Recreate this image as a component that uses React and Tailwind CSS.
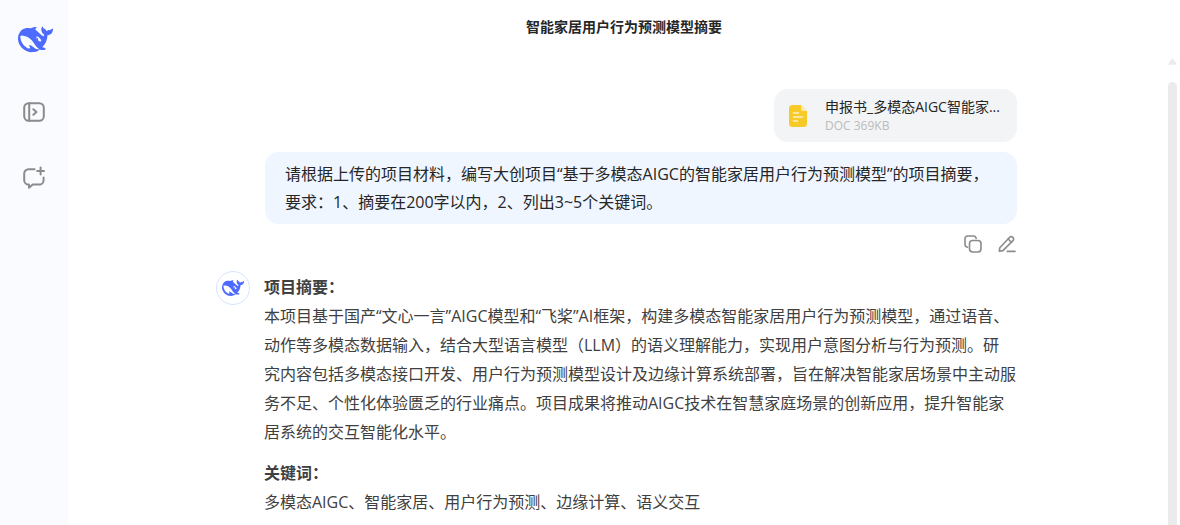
import React from 'react'

const keywords = ['多模态AIGC', '智能家居', '用户行为预测', '边缘计算', '语义交互']

function WhaleLogo({ className }) {
    return (
        <svg viewBox="0 0 24 24" fill="currentColor" className={className} aria-hidden="true">
            <path d="M23.748 4.482c-.254-.124-.364.113-.512.234-.051.039-.094.09-.137.136-.372.397-.806.657-1.373.626-.829-.046-1.537.214-2.163.848-.133-.782-.575-1.248-1.247-1.548-.352-.156-.708-.311-.955-.65-.172-.241-.219-.51-.305-.774-.055-.16-.11-.323-.293-.35-.2-.031-.278.136-.356.276-.313.572-.434 1.202-.422 1.84.027 1.436.633 2.58 1.838 3.393.137.093.172.187.129.323-.082.28-.18.552-.266.833-.055.179-.137.217-.329.14a5.526 5.526 0 01-1.736-1.18c-.857-.828-1.631-1.742-2.597-2.458a11.365 11.365 0 00-.689-.471c-.985-.957.13-1.743.388-1.836.27-.098.093-.432-.779-.428-.872.004-1.67.295-2.687.684a3.055 3.055 0 01-.465.137 9.597 9.597 0 00-2.883-.102c-1.885.21-3.39 1.102-4.497 2.623C.082 8.606-.231 10.684.152 12.85c.403 2.284 1.569 4.175 3.36 5.653 1.858 1.533 3.997 2.284 6.438 2.14 1.482-.085 3.133-.284 4.994-1.86.47.234.962.327 1.78.397.63.059 1.236-.03 1.705-.128.735-.156.684-.837.419-.961-2.155-1.004-1.682-.595-2.113-.926 1.096-1.296 2.746-2.642 3.392-7.003.05-.347.007-.565 0-.845-.004-.17.035-.237.23-.256a4.173 4.173 0 001.545-.475c1.396-.763 1.96-2.015 2.093-3.517.02-.23-.004-.467-.247-.588zM11.581 18c-2.089-1.642-3.102-2.183-3.52-2.16-.392.024-.321.471-.235.763.09.288.207.486.371.739.114.167.192.416-.113.603-.673.416-1.842-.14-1.897-.167-1.361-.802-2.5-1.86-3.301-3.307-.774-1.393-1.224-2.887-1.298-4.482-.02-.386.093-.522.477-.592a4.696 4.696 0 011.529-.039c2.132.312 3.946 1.265 5.468 2.774.868.86 1.525 1.887 2.202 2.891.72 1.066 1.494 2.082 2.48 2.914.348.292.625.514.891.677-.802.09-2.14.11-3.054-.614zm1-6.44a.306.306 0 01.415-.287.302.302 0 01.2.288.306.306 0 01-.31.307.303.303 0 01-.304-.308zm3.11 1.596c-.2.081-.399.151-.59.16a1.245 1.245 0 01-.798-.254c-.274-.23-.47-.358-.552-.758a1.73 1.73 0 01.016-.588c.07-.327-.008-.537-.239-.727-.187-.156-.426-.199-.688-.199a.559.559 0 01-.254-.078.253.253 0 01-.114-.358c.028-.054.16-.186.192-.21.356-.202.767-.136 1.146.016.352.144.618.408 1.001.782.391.451.462.576.685.914.176.265.336.537.445.848.067.195-.019.354-.25.452z" />
        </svg>
    )
}

function Sidebar() {
    return (
        <nav className="w-[68px] shrink-0 bg-[#f9fbff] flex flex-col items-center pt-[22px]">
            <a href="#" aria-label="DeepSeek" className="pl-[3px] text-[#4d6bfe]">
                <WhaleLogo className="size-[35px]" />
            </a>

            <button type="button" aria-label="打开边栏" className="mt-[43px] text-[#8b8b8b]">
                <svg width="24" height="24" viewBox="0 0 24 24" fill="none" stroke="currentColor" strokeWidth="2" strokeLinecap="round" strokeLinejoin="round">
                    <rect x="2.2" y="3.2" width="19.6" height="17.6" rx="4.5" />
                    <path d="M7.2 3.2v17.6" />
                    <path d="M11.3 9.2l3.2 2.8-3.2 2.8" />
                </svg>
            </button>

            <button type="button" aria-label="开启新对话" className="mt-[42px] text-[#8b8b8b]">
                <svg width="24" height="24" viewBox="0 0 24 24" fill="none" stroke="currentColor" strokeWidth="2" strokeLinecap="round" strokeLinejoin="round">
                    <path d="M12.6 3.2H6.6a4.4 4.4 0 0 0-4.4 4.4v6.6a4.4 4.4 0 0 0 4.4 4.4h.4v3.2l3.8-3.2h6.4a4.4 4.4 0 0 0 4.4-4.4v-2.6" />
                    <path d="M18.6 1.6v6.8M15.2 5H22" />
                </svg>
            </button>
        </nav>
    )
}

function FileCard() {
    return (
        <div className="w-[243px] h-[53px] self-end rounded-[14px] bg-[#f3f4f6] flex items-center pl-[15px] pr-3 gap-[18px]">
            <svg width="18" height="22" viewBox="0 0 18 22" className="shrink-0" aria-hidden="true">
                <path d="M3.5 0H12l6 6v12.500a3.500 3.500 0 0 1-3.500 3.500h-11A3.500 3.500 0 0 1 0 18.500v-15A3.500 3.500 0 0 1 3.500 0z" fill="#f8ca27" />
                <path d="M12 0l6 6h-4a2 2 0 0 1-2-2z" fill="#fbe9ae" />
                <path d="M4.5 8h5M4.5 12h9M4.5 16h4" stroke="#fdf1c9" strokeWidth="1.4" strokeLinecap="round" />
            </svg>
            <div className="min-w-0">
                <div className="text-sm leading-5 text-[#262626] whitespace-nowrap">申报书_多模态AIGC智能家...</div>
                <div className="text-xs leading-[18px] text-[#bbbbbb]">DOC 369KB</div>
            </div>
        </div>
    )
}

function MessageActions() {
    return (
        <div className="flex justify-end gap-4 mt-[11px] pr-px text-[#8b8b8b]">
            <button type="button" aria-label="复制">
                <svg width="18" height="18" viewBox="0 0 18 18" fill="none" stroke="currentColor" strokeWidth="1.6" strokeLinecap="round">
                    <rect x="5.5" y="5.5" width="11.5" height="11.5" rx="3.2" />
                    <path d="M3.4 12.2A3 3 0 0 1 1 9.3V4a3 3 0 0 1 3-3h5.300a3 3 0 0 1 2.900 2.300" />
                </svg>
            </button>
            <button type="button" aria-label="编辑">
                <svg width="18" height="18" viewBox="0 0 18 18" fill="none" stroke="currentColor" strokeWidth="1.6" strokeLinecap="round" strokeLinejoin="round">
                    <path d="M1.3 16.2l.5-3.500L11.700 2.300a2.100 2.100 0 0 1 3 0l.3.3a2.100 2.100 0 0 1 0 3L4.900 15.600z" />
                    <path d="M10.2 4l3.200 3.200M9.300 16.400H17" />
                </svg>
            </button>
        </div>
    )
}

function Answer() {
    return (
        <div className="flex gap-[14px] mt-[18px]">
            <div className="size-[34px] shrink-0 rounded-full border border-[#d5e4ff] flex items-center justify-center text-[#4d6bfe]">
                <WhaleLogo className="size-[22px]" />
            </div>
            <div className="flex-1 min-w-0 pt-[2px] leading-[29px] text-[#404040]">
                <h2 className="font-bold">项目摘要：</h2>
                <p>
                    本项目基于国产“文心一言”AIGC模型和“飞桨”AI框架，构建多模态智能家居用户行为预测模型，通过语音、动作等多模态数据输入，结合大型语言模型（LLM）的语义理解能力，实现用户意图分析与行为预测。研
                    <br />
                    究内容包括多模态接口开发、用户行为预测模型设计及边缘计算系统部署，旨在解决智能家居场景中主动服务不足、个性化体验匮乏的行业痛点。项目成果将推动AIGC技术在智慧家庭场景的创新应用，提升智能家
                    <br />
                    居系统的交互智能化水平。
                </p>
                <h2 className="font-bold mt-3">关键词：</h2>
                <p>{keywords.join('、')}</p>
            </div>
        </div>
    )
}

export default function App() {
    return (
        <div lang="zh-CN" className="flex h-screen overflow-hidden bg-white font-['Open_Sans','Noto_Sans_CJK_SC',sans-serif] text-base">
            <Sidebar />

            <div className="flex-1 min-w-0 flex flex-col">
                <header className="h-[54px] shrink-0 flex items-center justify-center">
                    <h1 className="text-sm font-bold text-[#262626]">智能家居用户行为预测模型摘要</h1>
                </header>

                <div className="flex-1 min-h-0 flex">
                    <main className="flex-1 min-w-0 overflow-hidden pt-[35px]">
                        <div className="max-w-[801px] mx-auto">
                            {/* User message */}
                            <div className="ml-[49px] flex flex-col">
                                <FileCard />
                                <div className="mt-[10px] rounded-[14px] bg-[#eff6ff] px-5 py-2 leading-7 text-[#262626]">
                                    请根据上传的项目材料，编写大创项目“基于多模态AIGC的智能家居用户行为预测模型”的项目摘要，
                                    <br />
                                    要求：1、摘要在200字以内，2、列出3~5个关键词。
                                </div>
                                <MessageActions />
                            </div>

                            <Answer />
                        </div>
                    </main>

                    {/* Scroll track */}
                    <div className="w-[15px] shrink-0 flex flex-col items-center pt-1" aria-hidden="true">
                        <svg width="9" height="8" viewBox="0 0 10 8" fill="#ebebeb">
                            <path d="M4.2.6a1 1 0 0 1 1.600 0l3.600 5.200a.8.8 0 0 1-.7 1.200H1.300a.8.8 0 0 1-.7-1.200z" />
                        </svg>
                        <div className="mt-4 w-[9px] flex-1 rounded-t-full bg-[#ebebeb]" />
                    </div>
                </div>
            </div>
        </div>
    )
}
